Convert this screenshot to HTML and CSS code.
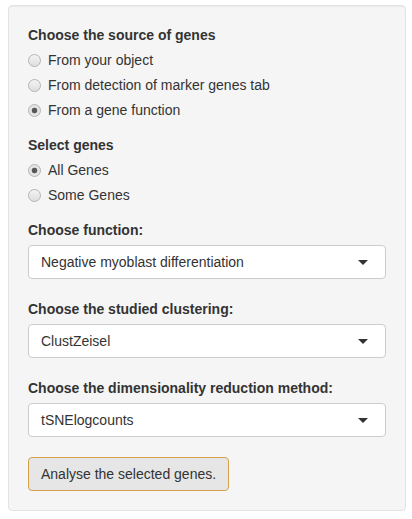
FILE: index.html
```html
<!DOCTYPE html>
<html>
<head>
<meta charset="utf-8">
<link rel="stylesheet" href="styles.css">
</head>
<body>
<div class="well">
  <div class="form-group">
    <label class="control-label">Choose the source of genes</label>
    <div class="options">
      <div class="radio"><label><input type="radio" name="src"><span>From your object</span></label></div>
      <div class="radio"><label><input type="radio" name="src"><span>From detection of marker genes tab</span></label></div>
      <div class="radio"><label><input type="radio" name="src" checked><span>From a gene function</span></label></div>
    </div>
  </div>
  <div class="form-group">
    <label class="control-label">Select genes</label>
    <div class="options">
      <div class="radio"><label><input type="radio" name="sel" checked><span>All Genes</span></label></div>
      <div class="radio"><label><input type="radio" name="sel"><span>Some Genes</span></label></div>
    </div>
  </div>
  <div class="form-group select-group">
    <label class="control-label">Choose function:</label>
    <div class="select"><span>Negative myoblast differentiation</span><span class="caret"></span></div>
  </div>
  <div class="form-group select-group">
    <label class="control-label">Choose the studied clustering:</label>
    <div class="select"><span>ClustZeisel</span><span class="caret"></span></div>
  </div>
  <div class="form-group select-group">
    <label class="control-label">Choose the dimensionality reduction method:</label>
    <div class="select"><span>tSNElogcounts</span><span class="caret"></span></div>
  </div>
  <button class="btn">Analyse the selected genes.</button>
</div>
</body>
</html>
```

FILE: styles.css
```css
html, body {
  margin: 0;
  padding: 0;
  background: #ffffff;
}
body {
  font-family: "Liberation Sans", Arial, sans-serif;
  font-size: 14px;
  line-height: 20px;
  color: #333333;
}
.well {
  margin: 5px 0 0 8px;
  width: 398px;
  box-sizing: border-box;
  padding: 19px;
  background: #f5f5f5;
  border: 1px solid #e3e3e3;
  border-radius: 4px;
  box-shadow: inset 0 1px 1px rgba(0,0,0,0.05);
}
.form-group {
  margin-bottom: 15px;
}
.select-group {
  margin-bottom: 20px;
}
.control-label {
  display: block;
  font-weight: bold;
  margin-bottom: 5px;
}
.radio {
  margin-bottom: 5px;
}
.radio:last-child {
  margin-bottom: 0;
}
.radio label {
  display: flex;
  align-items: flex-start;
  cursor: pointer;
}
.radio input {
  -webkit-appearance: none;
  appearance: none;
  width: 13px;
  height: 13px;
  margin: 4px 7px 0 0;
  flex: none;
  border-radius: 50%;
  border: 1px solid #b4b4b4;
  box-sizing: border-box;
  background: linear-gradient(#f4f4f4, #dedede);
}
.radio input:checked {
  background: radial-gradient(circle, #555 0, #5a5a5a 2.5px, #e4e4e4 3.2px, #e4e4e4 100%);
}
.select {
  display: flex;
  align-items: center;
  justify-content: space-between;
  height: 34px;
  box-sizing: border-box;
  padding: 6px 17px 6px 12px;
  background: #ffffff;
  border: 1px solid #cccccc;
  border-radius: 4px;
  width: 358px;
}
.caret {
  width: 0;
  height: 0;
  border-style: solid;
  border-width: 5px 5px 0 5px;
  border-color: #333333 transparent transparent transparent;
  margin-top: 1px;
}
.btn {
  font-family: inherit;
  font-size: 14px;
  line-height: 20px;
  color: #333333;
  height: 34px;
  padding: 6px 12px;
  background: #e6e6e6;
  border: 1px solid #d4a24a;
  border-radius: 4px;
  margin: 0;
  display: block;
  white-space: nowrap;
}
```
